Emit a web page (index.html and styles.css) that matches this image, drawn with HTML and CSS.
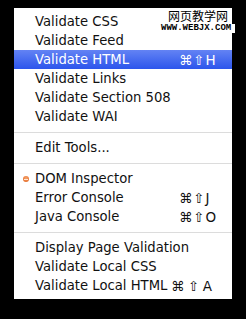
FILE: index.html
```html
<!DOCTYPE html>
<html>
<head>
    <meta charset="utf-8" />
    <title>Tools menu</title>
    <link rel="stylesheet" href="styles.css">
</head>
<body>
    <div class="menu">
        <div class="menu-item">Validate CSS</div>
        <div class="menu-item">Validate Feed</div>
        <div class="menu-item menu-item-active">Validate HTML<span class="menu-key">⌘⇧H</span></div>
        <div class="menu-item">Validate Links</div>
        <div class="menu-item">Validate Section 508</div>
        <div class="menu-item">Validate WAI</div>

        <div class="menu-sep"></div>

        <div class="menu-item">Edit Tools...</div>

        <div class="menu-sep"></div>

        <div class="menu-item"><span class="menu-mark"></span>DOM Inspector</div>
        <div class="menu-item">Error Console<span class="menu-key">⌘⇧J</span></div>
        <div class="menu-item">Java Console<span class="menu-key">⌘⇧O</span></div>

        <div class="menu-sep"></div>

        <div class="menu-item">Display Page Validation</div>
        <div class="menu-item">Validate Local CSS</div>
        <div class="menu-item">Validate Local HTML<span class="menu-key menu-key-wide">⌘⇧A</span></div>

        <div class="watermark">
            <div class="watermark-cn">网页教学网</div>
            <div class="watermark-url">WWW.WEBJX.COM</div>
        </div>
    </div>
</body>
</html>
```

FILE: styles.css
```css
body {
    margin: 0;
    padding: 0;
    background-color: #000000;
    font-family: "DejaVu Sans", sans-serif;
    width: 246px;
    height: 319px;
}

.menu {
    position: relative;
    margin: 8px 0 0 14px;
    width: 218px;
    padding: 4px 0 4px 0;
    background-color: #FFFFFF;
}

.menu-item {
    position: relative;
    display: flex;
    align-items: center;
    height: 19px;
    padding-left: 21px;

    font-size: 13.2px;
    color: #111111;
}

.menu-item-active {
    background: linear-gradient(#6383f4, #2c55ec);
    color: #FFFFFF;
}

.menu-key {
    position: absolute;
    left: 165px;
    font-size: 13.5px;
    letter-spacing: 0.8px;
}

.menu-key-wide {
    left: 157px;
    letter-spacing: 3.5px;
}

.menu-mark {
    position: absolute;
    left: 9px;
    top: 7px;
    width: 6px;
    height: 6px;
    border-radius: 50%;
    background: radial-gradient(circle at 50% 35%, #f6a46c, #e0601c);
}

.menu-mark::after {
    content: "";
    position: absolute;
    left: 1px;
    top: 2.5px;
    width: 4px;
    height: 1px;
    background-color: #FFE9D8;
}

.menu-sep {
    height: 12px;
    display: flex;
    align-items: center;
}

.menu-sep::before {
    content: "";
    display: block;
    width: 100%;
    height: 1px;
    background-color: #dcdcdc;
}

.watermark {
    position: absolute;
    left: 147px;
    top: 0;
    width: 74px;
}

.watermark-cn {
    margin-left: 7px;
    padding-top: 1px;
    font-family: "Noto Sans CJK SC", sans-serif;
    font-size: 12px;
    line-height: 13px;
    color: #000000;
}

.watermark-url {
    margin-top: 2px;
    height: 9px;
    background-color: #FFFFFF;
    font-family: "Liberation Mono", monospace;
    font-weight: bold;
    font-size: 9px;
    line-height: 9px;
    color: #000000;
}
```
